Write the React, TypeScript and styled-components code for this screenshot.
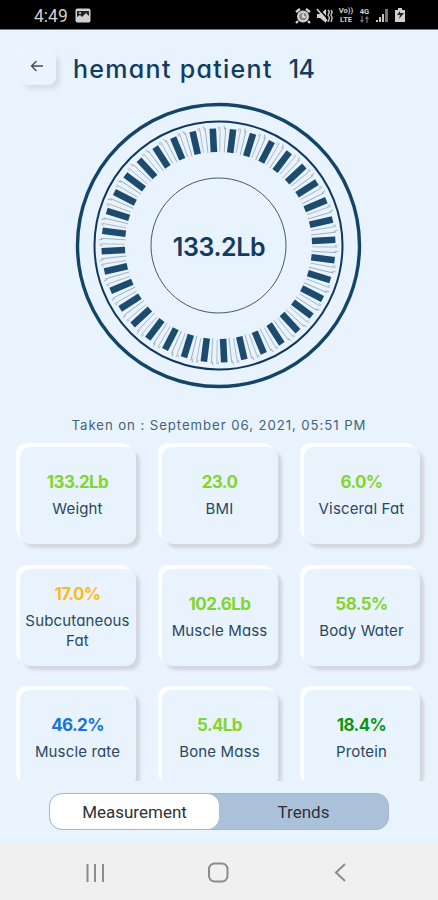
import React from "react";
import styled, { createGlobalStyle } from "styled-components";

const navy = "#123c60";

const GlobalStyle = createGlobalStyle`
  * { box-sizing: border-box; }
  body { margin: 0; background: #e8f3fe; }
`;

const Screen = styled.div`
  width: 438px;
  height: 900px;
  display: flex;
  flex-direction: column;
  overflow: hidden;
  background: #e8f3fe;
  color: ${navy};
  font-family: Inter, "Open Sans", sans-serif;
  font-feature-settings: "cv11";
`;

const StatusBar = styled.header`
  height: 30px;
  flex: none;
  display: flex;
  justify-content: space-between;
  align-items: center;
  padding: 2px 32px 0 34px;
  background: #000;
  border-bottom: 1px solid #777c82;
  color: #d0d0d0;
`;

const StatusGroup = styled.div<{ $gap: number }>`
  display: flex;
  align-items: center;
  gap: ${(p) => p.$gap}px;
`;

const Clock = styled.span`
  font: 400 17.5px/20px Roboto, sans-serif;
`;

const Header = styled.div`
  height: 72px;
  flex: none;
  display: flex;
  align-items: flex-start;
  padding: 21px 0 0 20px;
`;

const BackButton = styled.button`
  width: 36px;
  height: 34px;
  padding: 0 2px 4px 0;
  border: 0;
  border-radius: 8px;
  background: #e9f4fe;
  box-shadow: 4px 4px 4px #d9dee6, -3px -3px 4px #eef6fe;
  display: grid;
  place-items: center;
`;

const Title = styled.h1`
  margin: 3px 0 0 17px;
  font-size: 25px;
  line-height: 30px;
  font-weight: 550;
  letter-spacing: 1.3px;
  white-space: pre;
`;

const TitleNumber = styled.span`
  letter-spacing: -0.6px;
`;

const GaugeArea = styled.div`
  height: 285px;
  flex: none;
  display: grid;
  place-items: center;
  margin-left: -1px;
`;

const GaugeLabel = styled.text`
  font-size: 25px;
  font-weight: 560;
  letter-spacing: -0.35px;
  fill: ${navy};
`;

const Taken = styled.p`
  height: 49px;
  flex: none;
  margin: 0;
  padding-top: 29px;
  text-align: center;
  font-size: 13.2px;
  line-height: 18px;
  letter-spacing: 0.93px;
  white-space: nowrap;
  color: #42637a;
  font-feature-settings: normal;
`;

const CardViewport = styled.main`
  height: 345px;
  flex: none;
  overflow: hidden;
  padding: 11px 16px 0 20px;
`;

const CardGrid = styled.div`
  display: grid;
  grid-template-columns: repeat(3, 116px);
  grid-auto-rows: 97px;
  column-gap: 26px;
  row-gap: 24.5px;
`;

const Card = styled.section`
  display: flex;
  flex-direction: column;
  align-items: center;
  justify-content: center;
  padding: 0 1px 4px 0;
  border-radius: 10px;
  background: #e9f3fd;
  box-shadow: 4px 4px 3px #d3d6dd, -4px -4px 1.5px #fdfeff;
`;

const Value = styled.strong<{ $color: string }>`
  color: ${(p) => p.$color};
  font-size: 17px;
  line-height: 28px;
  font-weight: 750;
  letter-spacing: -0.6px;
`;

const Label = styled.span`
  font-size: 15px;
  line-height: 20px;
  margin: 3px -4px 0;
  letter-spacing: 0.15px;
  text-align: center;
  color: #29475f;
`;

const SwitchArea = styled.div`
  height: 62px;
  flex: none;
  padding: 12px 49px 0;
`;

const Segments = styled.div`
  height: 37px;
  display: flex;
  border: 1px solid #a5b8cc;
  border-radius: 13px;
  background: #abc1da;
  overflow: hidden;
`;

const Segment = styled.button<{ $active?: boolean }>`
  flex: 1;
  padding: 0;
  border: 0;
  border-radius: 12px;
  background: ${(p) => (p.$active ? "#fff" : "transparent")};
  color: #2d3136;
  font: 400 17px/37px Roboto, sans-serif;
  letter-spacing: 0;
`;

const NavBar = styled.nav`
  flex: 1;
  display: flex;
  align-items: center;
  justify-content: space-between;
  padding: 2px 87px 0 84px;
  background: #f0f0f0;
`;

const measurements = [
  { value: "133.2Lb", label: "Weight", color: "#82d52d" },
  { value: "23.0", label: "BMI", color: "#82d52d" },
  { value: "6.0%", label: "Visceral Fat", color: "#82d52d" },
  { value: "17.0%", label: "Subcutaneous Fat", color: "#fbbd16" },
  { value: "102.6Lb", label: "Muscle Mass", color: "#82d52d" },
  { value: "58.5%", label: "Body Water", color: "#82d52d" },
  { value: "46.2%", label: "Muscle rate", color: "#1673dc" },
  { value: "5.4Lb", label: "Bone Mass", color: "#82d52d" },
  { value: "18.4%", label: "Protein", color: "#0c9512" },
];

function Gauge() {
  return (
    <svg width="287" height="287" viewBox="-143.5 -143.5 287 287">
      <circle r="141" fill="none" stroke="#134568" strokeWidth="3.4" />
      <circle r="124" fill="none" stroke="#12375f" strokeWidth="2" />
      <circle r="67.5" fill="none" stroke="#43596b" strokeWidth="1" />
      {Array.from({ length: 36 }, (_, i) => (
        <g key={i} transform={`rotate(${i * 10 - 2.8})`}>
          <rect x="-3.3" y="-117" width="6.6" height="23.5" fill="#1d4b6d" />
          <g transform="rotate(3.6)" stroke="#a3b3be" strokeWidth="0.8">
            <path d="M0-119V-94M-1.6-119v3" />
          </g>
          <g transform="rotate(6.3)" stroke="#93a5b1" strokeWidth="0.8">
            <path d="M0-118V-93M-1.8-120l1 4" />
          </g>
        </g>
      ))}
      <GaugeLabel x="0.5" y="10" textAnchor="middle">133.2Lb</GaugeLabel>
    </svg>
  );
}

const PictureIcon = () => (
  <svg width="16" height="15" viewBox="0 0 16 15">
    <rect x=".5" y=".5" width="15" height="14" rx="2" fill="#d0d0d0" />
    <path d="M2 3h12v9H2z" fill="#222" />
    <path d="M2 12V9l3-2 2 2 4-4 3 3v4z" fill="#d0d0d0" />
    <circle cx="5" cy="5" r="1.1" fill="#d0d0d0" />
  </svg>
);

const AlarmIcon = () => (
  <svg width="16" height="16" viewBox="0 0 16 16">
    <path d="m1 4 4-3M15 4l-4-3M3 13l-2 2M13 13l2 2" stroke="#d0d0d0" strokeWidth="2.4" />
    <circle cx="8" cy="8.5" r="6" fill="#d0d0d0" />
    <circle cx="8" cy="8.5" r="3.8" fill="#888" />
    <path d="M8 5.5v3.4h2.6" fill="none" stroke="#e5e5e5" strokeWidth="1.5" />
  </svg>
);

const MuteIcon = () => (
  <svg width="17" height="16" viewBox="0 0 17 16">
    <path d="M1 6h3l6-5v14L4 10H1z" fill="#d0d0d0" />
    <path d="M3 1 11 10" stroke="#000" strokeWidth="1.5" />
    <path d="m1 1 10 12" stroke="#d0d0d0" strokeWidth="1.6" />
    <path d="m12 2 1.5 2-1.5 3 1.5 3-1.5 4M15 2l1.2 2L15 7l1.2 3L15 14" fill="none" stroke="#c4c4c4" strokeWidth="1.4" />
  </svg>
);

const StackedText = styled.span<{ $width: number }>`
  width: ${(p) => p.$width}px;
  display: flex;
  flex-direction: column;
  align-items: center;
  gap: 1px;
  font: 700 7.6px/7.6px Roboto, sans-serif;
`;

const SignalIcon = () => (
  <svg width="14" height="15" viewBox="0 0 14 15" fill="#c5c5c5">
    <path d="M1 12h2v2H1zM4 9h2v5H4zM7 6h2v8H7z" />
    <path d="M10 1h3v13h-3z" fill="#777" />
  </svg>
);

const BatteryIcon = () => (
  <svg width="12" height="15" viewBox="0 0 12 15">
    <path d="M4 0h4v2h3v12H1V2h3z" fill="#d0d0d0" />
    <path d="m6 3-3 4h3l-1 4 5-6H6z" fill="#222" />
  </svg>
);

const DataIcon = () => (
  <StackedText $width={11}>
    <span>4G</span>
    <svg width="9" height="7" viewBox="0 0 9 7" fill="none" stroke="#737373" strokeWidth="1.2">
      <path d="M2 0v6M.5 4 2 6l1.5-2M7 7V1M5.500 3 7 1l1.500 2" />
    </svg>
  </StackedText>
);

export default function App() {
  return (
    <Screen>
      <GlobalStyle />
      <StatusBar>
        <StatusGroup $gap={7}>
          <Clock>4:49</Clock>
          <PictureIcon />
        </StatusGroup>
        <StatusGroup $gap={5}>
          <AlarmIcon />
          <MuteIcon />
          <StackedText $width={16}><span>Vo))</span><span>LTE</span></StackedText>
          <DataIcon />
          <SignalIcon />
          <BatteryIcon />
        </StatusGroup>
      </StatusBar>
      <Header>
        <BackButton aria-label="Back">
          <svg width="14" height="14" viewBox="0 0 14 14" fill="none" stroke="#3b4b60" strokeWidth="1.3">
            <path d="M13 7H2M6.500 2 1.500 7l5 5" />
          </svg>
        </BackButton>
        <Title>hemant patient  <TitleNumber>14</TitleNumber></Title>
      </Header>
      <GaugeArea><Gauge /></GaugeArea>
      <Taken>Taken on : September 06, 2021, 05:51 PM</Taken>
      <CardViewport>
        <CardGrid>
          {measurements.map((item) => (
            <Card key={item.label}>
              <Value $color={item.color}>{item.value}</Value>
              <Label>{item.label}</Label>
            </Card>
          ))}
        </CardGrid>
      </CardViewport>
      <SwitchArea>
        <Segments>
          <Segment $active>Measurement</Segment>
          <Segment>Trends</Segment>
        </Segments>
      </SwitchArea>
      <NavBar>
        <svg width="22" height="20" viewBox="0 0 22 20" stroke="#8b8b8b" strokeWidth="2">
          <path d="M3.500 1v18M11 1v18M19 1v18" />
        </svg>
        <svg width="22" height="22" viewBox="0 0 22 22" fill="none" stroke="#8b8b8b" strokeWidth="2">
          <rect x="1" y="1.500" width="18.500" height="18" rx="5.500" />
        </svg>
        <svg width="20" height="20" viewBox="0 0 20 20" fill="none" stroke="#8b8b8b" strokeWidth="2">
          <path d="M14 1 5 9.500l9 8.500" />
        </svg>
      </NavBar>
    </Screen>
  );
}
